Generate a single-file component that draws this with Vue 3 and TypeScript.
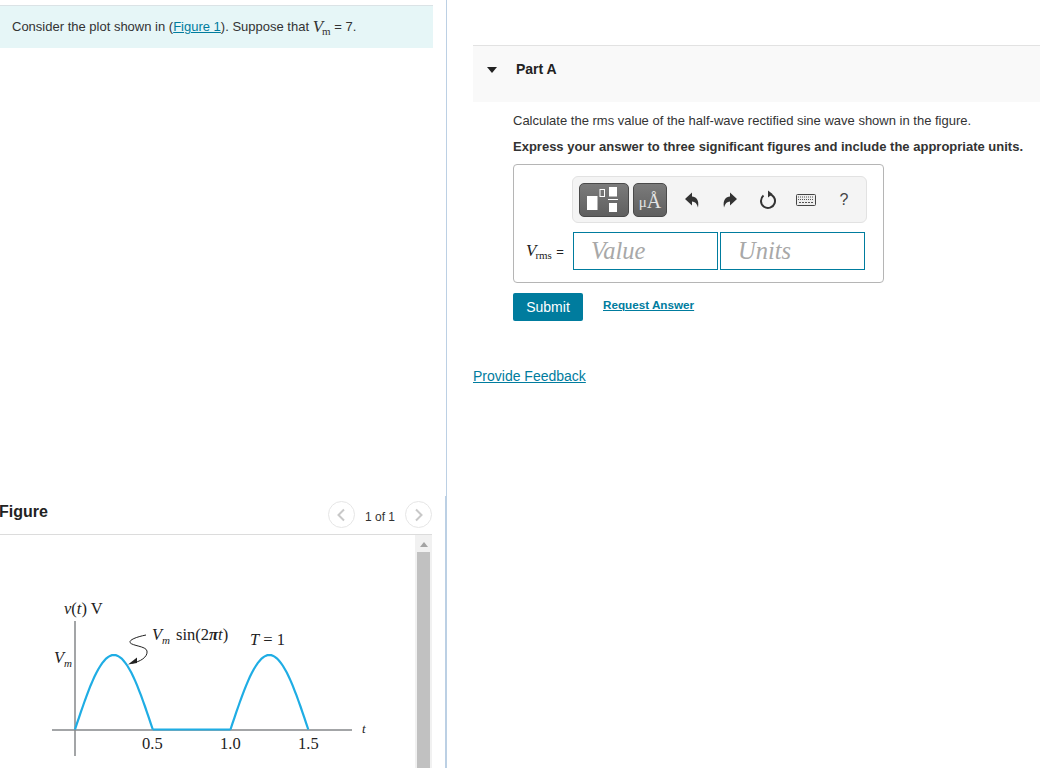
<script setup lang="ts">
const tools = ['undo', 'redo', 'reset', 'keyboard', 'help']

// half-wave rectified sine, scaled to the plot axes
const baseY = 194.5
const peak = 74.5
const xPerSecond = 155.5
function wave(from: number, to: number): string {
  const pts: string[] = []
  for (let i = 0; i <= 40; i++) {
    const t = from + ((to - from) * i) / 40
    const y = baseY - peak * Math.max(0, Math.sin(2 * Math.PI * t))
    pts.push(`${(75 + t * xPerSecond).toFixed(1)} ${y.toFixed(1)}`)
  }
  return 'M' + pts.join('L')
}
const curve = wave(0, 0.5) + wave(0.5, 1) + wave(1, 1.5)
</script>

<template>
  <div class="page">
    <div class="left">
      <div class="prompt">
        Consider the plot shown in (<a class="link">Figure 1</a>). Suppose that
        <span class="math"><i>V</i><sub>m</sub></span> = 7.
      </div>

      <div class="figure-head">
        <h3>Figure</h3>
        <div class="pager">
          <span class="circle">
            <svg width="10" height="14" viewBox="0 0 10 14"><path d="M8 1.500 2.500 7 8 12.500" fill="none" stroke="#c8c8c8" stroke-width="2" /></svg>
          </span>
          <span class="count">1 of 1</span>
          <span class="circle">
            <svg width="10" height="14" viewBox="0 0 10 14"><path d="M2 1.500 7.500 7 2 12.500" fill="none" stroke="#c8c8c8" stroke-width="2" /></svg>
          </span>
        </div>
      </div>

      <div class="figure-body">
        <div class="plot">
          <svg width="370" height="233" viewBox="0 0 370 233">
            <path d="M75 86V221M52 195H352" fill="none" stroke="#85888b" stroke-width="1.500" />
            <path :d="curve" fill="none" stroke="#1fade4" stroke-width="2.200" />
            <path d="M146 100C136 102 129 105 130 107.500C132 111 146 111 147 116C148 122 140 127 132 128" fill="none" stroke="#222" stroke-width="1" />
            <path d="M128 129.500 137 122.500 137 128Z" fill="#222" />
          </svg>
          <span class="t ty"><i>v</i>(<i>t</i>) V</span>
          <span class="t tvm"><i>V<sub>m</sub></i></span>
          <span class="t tsin"><i>V<sub>m</sub></i><span class="sin">sin(2<b><i>π</i></b><i>t</i>)</span></span>
          <span class="t tT"><i>T</i> = 1</span>
          <span class="t tt"><i>t</i></span>
          <span class="t x1">0.5</span>
          <span class="t x2">1.0</span>
          <span class="t x3">1.5</span>
        </div>
        <div class="scrollbar">
          <span class="arrow"></span>
          <span class="thumb"></span>
        </div>
      </div>
    </div>

    <div class="right">
      <div class="part-head">
        <span class="caret"></span>
        <span class="part-title">Part A</span>
      </div>

      <div class="part-body">
        <p class="question">Calculate the rms value of the half-wave rectified sine wave shown in the figure.</p>
        <p class="express">Express your answer to three significant figures and include the appropriate units.</p>

        <div class="answer-box">
          <div class="toolbar">
            <button class="tmpl wide">
              <svg width="48" height="32" viewBox="0 0 48 32">
                <path d="M7 12H17.500V26H7ZM29 3H37V12.500H29ZM29 19H37V28H29Z" fill="#fff" />
                <rect x="20" y="5.500" width="4.500" height="7" fill="none" stroke="#fff" />
                <path d="M28 15.500H38" stroke="#fff" />
              </svg>
            </button>
            <button class="tmpl units"><span class="mu">μ</span>Å</button>
            <span v-for="tool in tools" :key="tool" class="tool">
              <svg v-if="tool === 'undo'" width="16" height="16" viewBox="0 0 16 16">
                <path d="M1 7 8 .5V4.500C12 4.500 15.500 8 14 15.500C13 11.500 11 9.500 8 9.500V13.500Z" fill="#333" />
              </svg>
              <svg v-else-if="tool === 'redo'" width="16" height="16" viewBox="0 0 16 16">
                <path d="M15 7 8 .5V4.500C4 4.500 .5 8 2 15.500C3 11.500 5 9.500 8 9.500V13.500Z" fill="#333" />
              </svg>
              <svg v-else-if="tool === 'reset'" width="18" height="20" viewBox="0 0 18 20">
                <path d="M4.500 5.600A7 7 0 1 0 9.500 4" fill="none" stroke="#333" stroke-width="2" />
                <path d="M9 .5 13.500 4 9 7.500Z" fill="#333" />
              </svg>
              <svg v-else-if="tool === 'keyboard'" width="20" height="12" viewBox="0 0 20 12">
                <rect x=".5" y=".5" width="19" height="11" rx="1" fill="#eee" stroke="#444" />
                <path d="M2 3h16M2 5.500h16" stroke="#555" stroke-dasharray="1 1" />
                <path d="M3 8.500h14" stroke="#555" stroke-dasharray="2 1" />
              </svg>
              <span v-else class="help">?</span>
            </span>
          </div>

          <div class="input-row">
            <label class="math var"><i>V</i><sub>rms</sub> <span class="eq">=</span></label>
            <div class="field">Value</div>
            <div class="field">Units</div>
          </div>
        </div>

        <div class="actions">
          <button class="submit">Submit</button>
          <a class="link request">Request Answer</a>
        </div>
      </div>

      <a class="link feedback">Provide Feedback</a>
    </div>
  </div>
</template>

<style>
  html, body {
    margin: 0;
    background: #fff;
    overflow: hidden;
  }
</style>

<style scoped>
  .page {
    display: flex;
    height: 768px;
    font-family: "Liberation Sans", Arial, sans-serif;
    font-size: 13px;
    color: #333;
    overflow: hidden;
  }

  .left {
    position: relative;
    width: 447px;
    height: 768px;
    flex: none;
    box-sizing: border-box;
    border-right: 1px solid #bcd0e4;
    padding-top: 5px;
  }
  .left::after {
    content: "";
    position: absolute;
    top: 496px;
    bottom: 0;
    right: 0;
    width: 1px;
    background: #bcd0e4;
  }
  .prompt {
    width: 433px;
    height: 43px;
    box-sizing: border-box;
    background: #e6f6f7;
    border-top: 1px solid #dbe3e6;
    padding: 12px 0 0 12px;
    line-height: 18px;
  }
  .link {
    color: #007c9e;
    text-decoration: underline;
  }
  .math {
    font-family: "Liberation Serif", serif;
  }
  .prompt .math {
    font-size: 17px;
    line-height: 0;
    vertical-align: -1px;
  }
  .math sub {
    font-size: 11px;
    line-height: 0;
    vertical-align: -3px;
    margin-left: -1px;
  }

  .figure-head {
    display: flex;
    justify-content: space-between;
    align-items: center;
    width: 432px;
    height: 42px;
    margin-top: 445px;
    padding-top: 2px;
    box-sizing: border-box;
    border-bottom: 1px solid #dcdcdc;
  }
  .figure-head h3 {
    margin: 0 0 6px -1px;
    font-size: 16px;
    font-weight: bold;
    color: #222;
  }
  .pager {
    display: flex;
    align-items: center;
    gap: 10px;
  }
  .count {
    margin-top: 4px;
    font-size: 12px;
    color: #333;
  }
  .circle {
    display: flex;
    align-items: center;
    justify-content: center;
    width: 25px;
    height: 25px;
    border: 1px solid #e6e6e6;
    border-radius: 50%;
  }

  .figure-body {
    display: flex;
    width: 432px;
    height: 233px;
  }
  .plot {
    position: relative;
    width: 415px;
    flex: none;
    font-family: "Liberation Serif", serif;
    font-size: 16.500px;
    color: #222;
  }
  .plot svg {
    display: block;
  }
  .t {
    position: absolute;
    white-space: nowrap;
    line-height: 18px;
  }
  .t sub {
    font-size: 11px;
    line-height: 0;
  }
  .sin {
    margin-left: 6px;
  }
  .ty { left: 64px; top: 65px; }
  .tvm { left: 54px; top: 114px; }
  .tsin { left: 152px; top: 91px; }
  .tT { left: 250px; top: 96px; }
  .tt { left: 362px; top: 185px; font-size: 13px; }
  .x1 { left: 142px; top: 200px; }
  .x2 { left: 220px; top: 200px; }
  .x3 { left: 298px; top: 200px; }

  .scrollbar {
    width: 17px;
    display: flex;
    flex-direction: column;
    align-items: center;
    background: #f1f1f1;
  }
  .arrow {
    width: 0;
    height: 0;
    margin: 7px 0 5px;
    border-left: 4px solid transparent;
    border-right: 4px solid transparent;
    border-bottom: 5px solid #a3a3a3;
  }
  .thumb {
    width: 13px;
    flex: 1;
    background: #c1c1c1;
  }

  .right {
    flex: 1;
    min-width: 0;
    padding: 45px 0 0 26px;
  }
  .part-head {
    display: flex;
    align-items: flex-start;
    height: 57px;
    box-sizing: border-box;
    background: #f9f9f9;
    border-top: 1px solid #e2e2e2;
    padding: 15px 0 0 14px;
  }
  .caret {
    width: 0;
    height: 0;
    margin: 6px 19px 0 0;
    border-left: 5.500px solid transparent;
    border-right: 5.500px solid transparent;
    border-top: 6px solid #222;
  }
  .part-title {
    font-weight: bold;
    font-size: 14px;
    line-height: 16px;
    color: #222;
  }
  .part-body {
    padding: 11px 0 0 40px;
  }
  .question {
    margin: 0 0 10px;
    line-height: 16px;
    white-space: nowrap;
  }
  .express {
    margin: 0 0 9px;
    font-weight: bold;
    line-height: 16px;
    white-space: nowrap;
  }
  .answer-box {
    width: 371px;
    height: 119px;
    box-sizing: border-box;
    border: 1px solid #b5b5b5;
    border-radius: 4px;
    padding-top: 11px;
  }
  .toolbar {
    display: flex;
    align-items: center;
    width: 295px;
    height: 47px;
    margin-left: 58px;
    box-sizing: border-box;
    background: #f4f4f4;
    border: 1px solid #e2e2e2;
    border-radius: 6px;
    padding-left: 6px;
  }
  .tmpl {
    height: 34px;
    padding: 0;
    display: flex;
    align-items: center;
    justify-content: center;
    background: linear-gradient(#7b7b7b, #5f5f5f);
    border: 1px solid #4a4a4a;
    border-radius: 5px;
  }
  .wide {
    width: 50px;
    margin-right: 4px;
  }
  .units {
    width: 34px;
    margin-right: 6px;
    padding-top: 3px;
    color: #e4e4e4;
    font-family: "Liberation Serif", serif;
    font-size: 20px;
  }
  .mu {
    font-size: 15px;
    margin-top: 3px;
  }
  .tool {
    display: flex;
    align-items: center;
    justify-content: center;
    width: 38px;
  }
  .help {
    font-size: 16px;
    color: #444;
  }
  .input-row {
    display: flex;
    align-items: center;
    margin-top: 9px;
    gap: 2px;
  }
  .var {
    width: 45px;
    flex: none;
    margin-left: 12px;
    font-size: 17px;
    color: #222;
    white-space: nowrap;
  }
  .eq {
    font-family: "Liberation Sans", sans-serif;
    font-size: 13px;
  }
  .field {
    width: 145px;
    height: 38px;
    box-sizing: border-box;
    border: 1px solid #007c9e;
    padding-left: 17px;
    font-family: "Liberation Serif", serif;
    font-style: italic;
    font-size: 24.500px;
    line-height: 36px;
    color: #a8a8a8;
  }
  .actions {
    display: flex;
    align-items: center;
    margin-top: 10px;
    gap: 20px;
  }
  .submit {
    width: 70px;
    height: 28px;
    padding: 0;
    border: none;
    border-radius: 2px;
    background: #007c9e;
    color: #fff;
    font-family: "Liberation Sans", sans-serif;
    font-size: 14px;
  }
  .request {
    font-weight: bold;
    font-size: 11.700px;
    margin-bottom: 5px;
  }
  .feedback {
    display: block;
    margin-top: 47px;
    font-size: 14px;
    line-height: 16px;
  }
</style>
